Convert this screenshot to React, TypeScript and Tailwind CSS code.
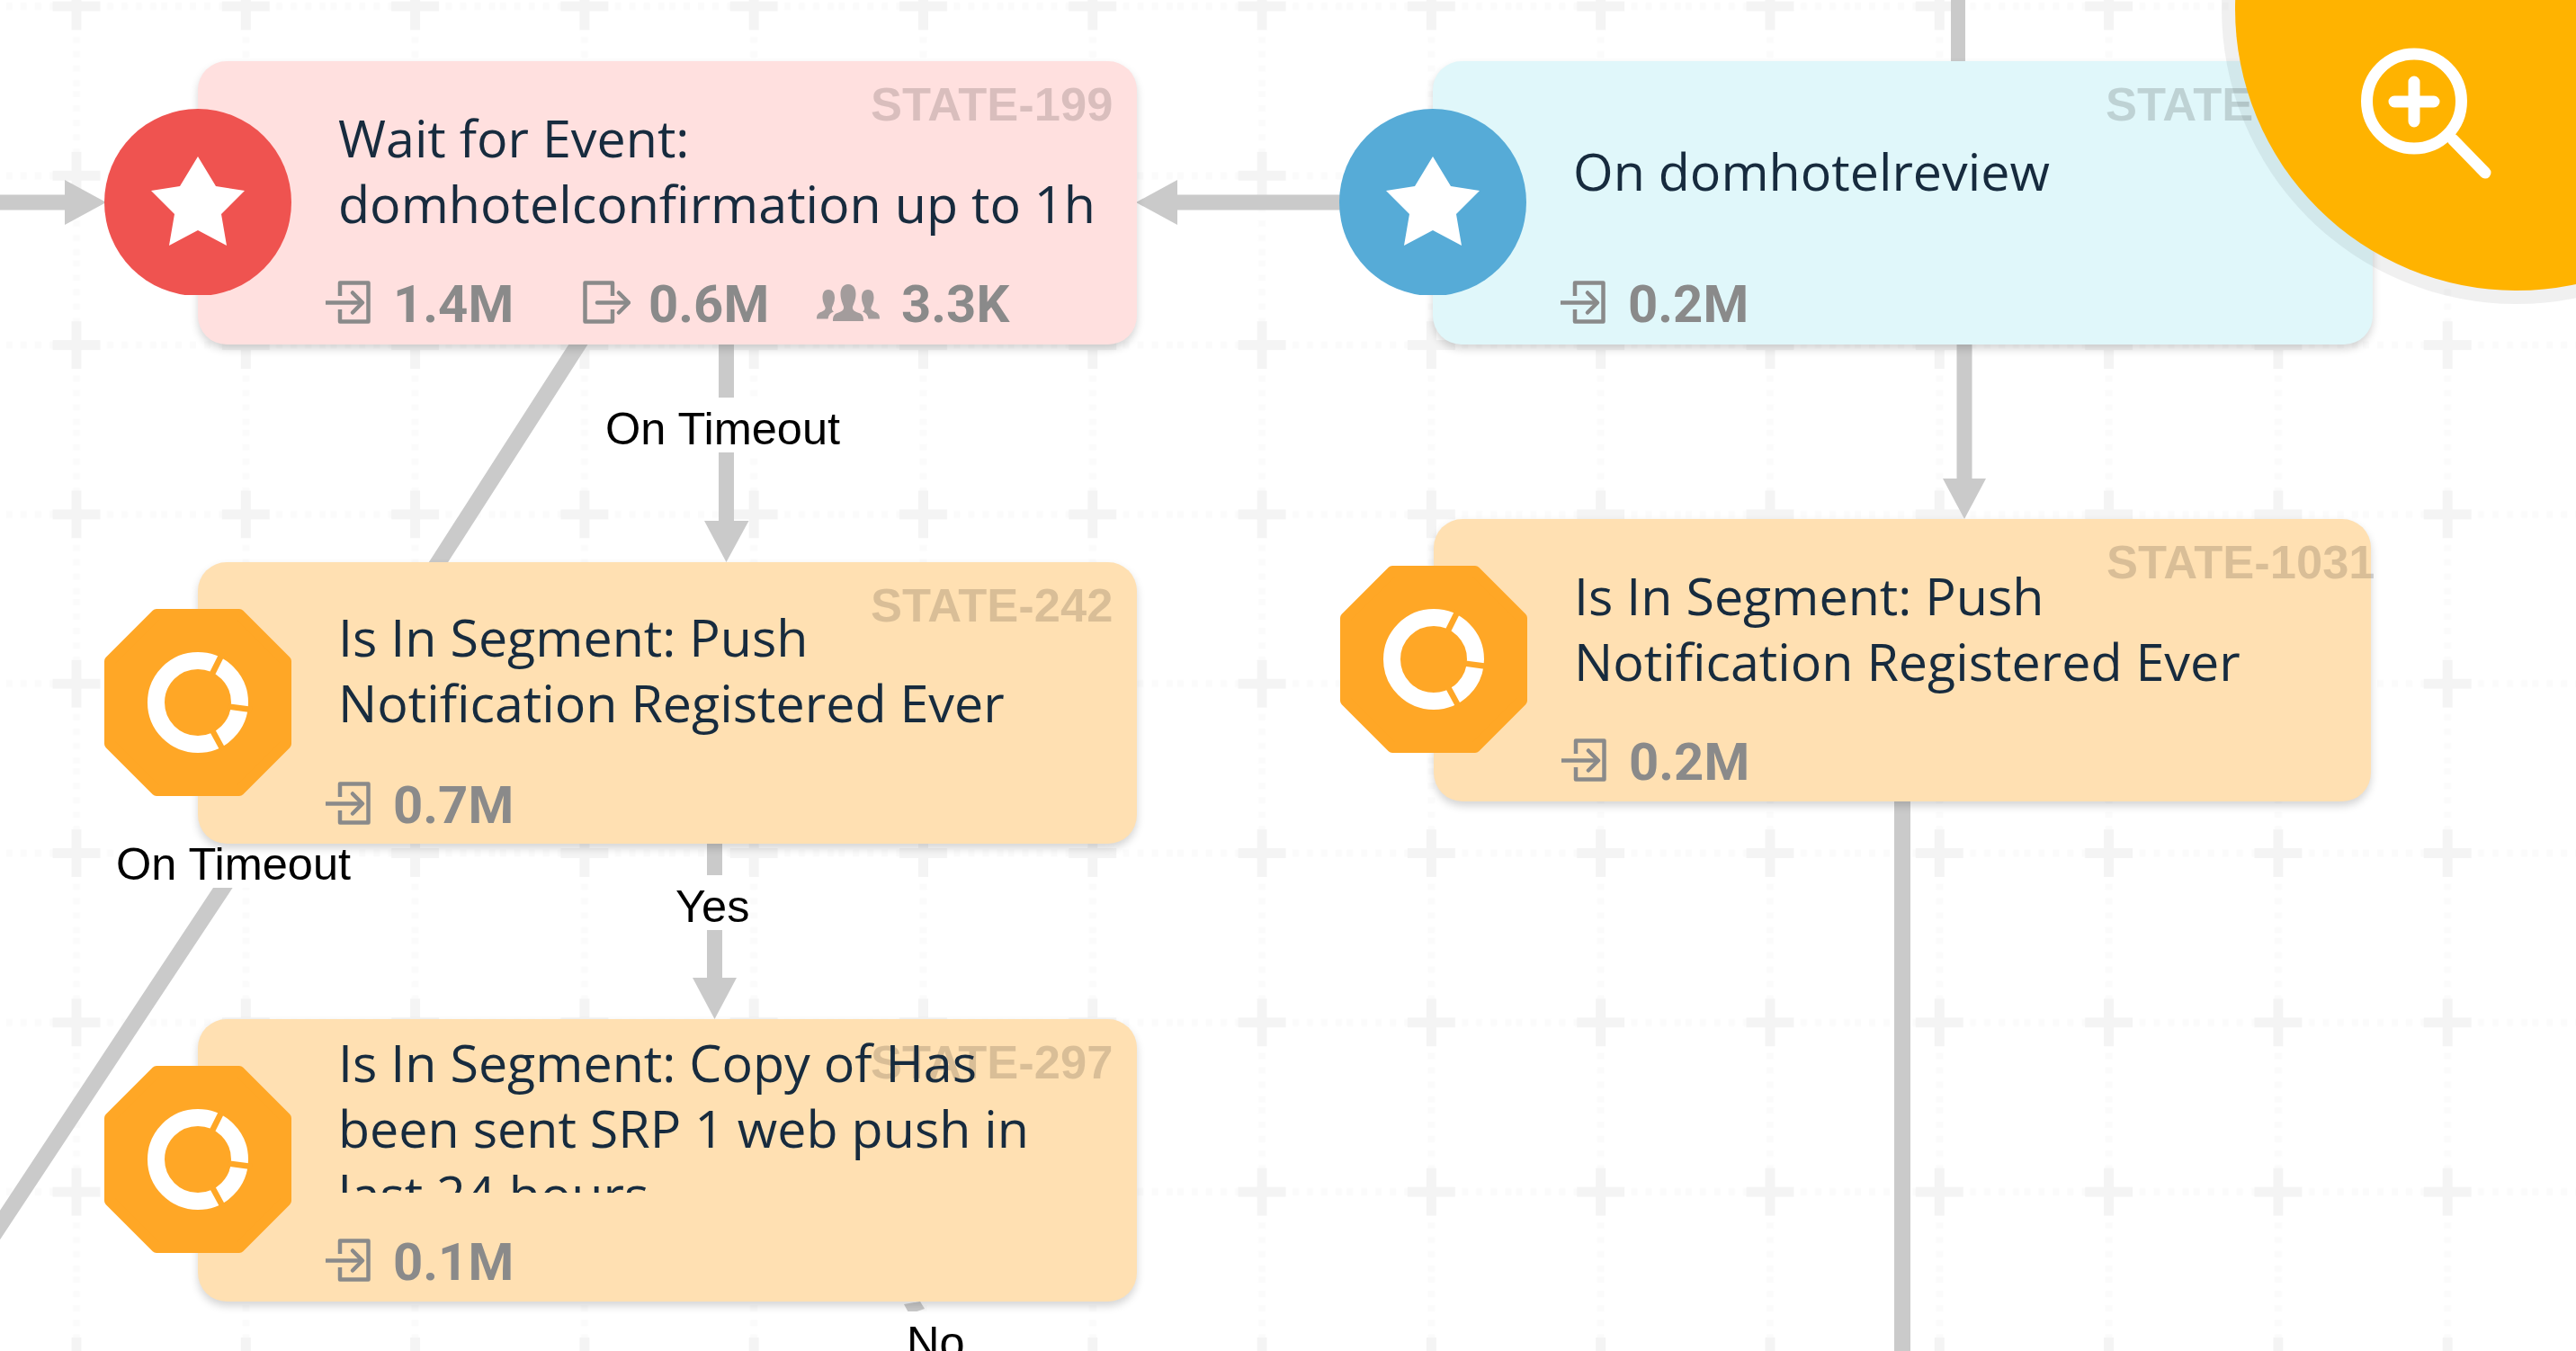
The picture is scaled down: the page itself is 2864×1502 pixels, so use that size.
import React from "react";

const LoginIcon = () => (
  <svg width="50" height="48" viewBox="0 0 50 48" fill="none" stroke="#8a8a8a" strokeWidth="4.5" className="shrink-0">
    <path d="M16 17V2.5H47.5V45.5H16V32" strokeLinejoin="round" />
    <path d="M0.5 24.5H40" strokeLinecap="round" />
    <path d="M30 13.5L41 24.5L30 35.5" strokeLinecap="round" strokeLinejoin="round" />
  </svg>
);

const LogoutIcon = () => (
  <svg width="53" height="48" viewBox="0 0 53 48" fill="none" stroke="#8a8a8a" strokeWidth="4.5" className="shrink-0">
    <path d="M33 17V2.5H2.5V45.5H33V32" strokeLinejoin="round" />
    <path d="M16 24.5H50" strokeLinecap="round" />
    <path d="M40 13.5L51 24.5L40 35.5" strokeLinecap="round" strokeLinejoin="round" />
  </svg>
);

const UsersIcon = () => (
  <svg width="70" height="48" viewBox="0 0 70 48" fill="#a39c9c" className="shrink-0">
    <path d="M35 4c6 0 8.5 5 8.5 11 0 6-2.500 11-3.500 14-.5 3 1 5 7 7 4 1.500 5 4 5 9H18c0-5 1-7.500 5-9 6-2 7.500-4 7-7-1-3-3.500-8-3.500-14C26.500 9 29 4 35 4z" />
    <path d="M13 10c5 0 7 4 7 9 0 5-2 8-3 11-.3 2 .5 3.500 2 4.500-4 1.500-6 4-6.500 8H0c0-4 1-6 4.500-7.500 4-1.500 5.500-3 5-5.500-1-2.500-3-6-3-10.500C6.500 14 8 10 13 10z" />
    <path d="M57 10c-5 0-7 4-7 9 0 5 2 8 3 11 .3 2-.5 3.500-2 4.500 4 1.500 6 4 6.500 8H70c0-4-1-6-4.500-7.500-4-1.500-5.500-3-5-5.500 1-2.500 3-6 3-10.500C63.500 14 62 10 57 10z" />
  </svg>
);

const Star = ({ fill }: { fill: string }) => (
  <svg width="208" height="208" viewBox="-104 -104 208 208" className="absolute left-[-104px] top-[52px]">
    <circle r="104" cy="1" fill={fill} />
    <path d="M0 -50L20 -17L52 -12L26 14L32 49L0 32L-32 49L-26 14L-52 -12L-20 -17Z" fill="#fff" strokeLinejoin="round" />
  </svg>
);

const Segment = () => (
  <svg width="208" height="208" viewBox="-104 -104 208 208" className="absolute left-[-104px] top-[52px]">
    <path d="M-46 -98H46L98 -46V46L46 98H-46L-98 46V-46Z" fill="#ffa726" stroke="#ffa726" strokeWidth="12" strokeLinejoin="round" />
    <circle r="46.500" fill="none" stroke="#fff" strokeWidth="19" />
    <g stroke="#ffa726" strokeWidth="6.500">
      <line x1="15" y1="-30" x2="27" y2="-54" />
      <line x1="33" y1="4.400" x2="60" y2="8" />
      <line x1="15.500" y1="30" x2="28" y2="53" />
    </g>
  </svg>
);

type Stat = { k: "in" | "out" | "users"; v: string };

const StatItem = ({ k, v }: Stat) => {
  if (k === "in")
    return (
      <div className="flex w-[286px] items-start gap-[25px]">
        <LoginIcon />
        <span className="font-['Roboto'] text-[58px] leading-[53px] font-bold text-[#8a8a8a]">{v}</span>
      </div>
    );
  if (k === "out")
    return (
      <div className="flex w-[260px] items-start gap-[20px]">
        <LogoutIcon />
        <span className="font-['Roboto'] text-[58px] leading-[53px] font-bold text-[#8a8a8a]">{v}</span>
      </div>
    );
  return (
    <div className="flex items-start gap-[24px]">
      <UsersIcon />
      <span className="font-['Roboto'] text-[58px] leading-[53px] font-bold text-[#8a8a8a]">{v}</span>
    </div>
  );
};

type NodeProps = {
  pos: string;
  bg: string;
  id: string;
  lines: string[];
  icon: React.ReactNode;
  stats: Stat[];
  textBox?: string;
};

const Node = ({ pos, bg, id, lines, icon, stats, textBox }: NodeProps) => (
  <div className={`absolute rounded-[32px] shadow-[0_5px_10px_rgba(0,0,0,0.17)] ${pos} ${bg}`}>
    <div className="absolute left-[748px] top-[19px] text-[52.5px] leading-[58px] font-bold text-black/15 whitespace-nowrap">
      {id}
    </div>
    {icon}
    <div className="relative pl-[156px] pt-[12px]">
      <div className="flex h-[220px] items-center">
        <div className={`font-['Open_Sans'] text-[57.4px] leading-[73px] text-[#172b3e] whitespace-nowrap ${textBox ?? ""}`}>
          {lines.map((l) => (
            <div key={l}>{l}</div>
          ))}
        </div>
      </div>
      <div className="ml-[-14px] mt-[12px] flex">
        {stats.map((s) => (
          <StatItem key={s.k} {...s} />
        ))}
      </div>
    </div>
  </div>
);

const Grid = () => (
  <svg width="2864" height="1502" className="absolute inset-0">
    <defs>
      <pattern id="grid" x="-9.150" y="-87.150" width="188.300" height="188.300" patternUnits="userSpaceOnUse">
        <g fill="none">
          <path d="M94.150 0V188.300M0 94.150H188.300" stroke="#fbfbfb" strokeWidth="8" strokeDasharray="7 9" />
          <path d="M67.650 94.150H120.650M94.150 67.650V120.650" stroke="#f4f4f4" strokeWidth="11" />
        </g>
      </pattern>
    </defs>
    <rect width="2864" height="1502" fill="url(#grid)" />
  </svg>
);

const Edges = () => (
  <svg width="2864" height="1502" className="absolute inset-0">
    <g stroke="#cacaca" fill="none">
      <line x1="0" y1="225" x2="74" y2="225" strokeWidth="17" />
      <line x1="1305" y1="225" x2="1492" y2="225" strokeWidth="17" />
      <line x1="2177" y1="0" x2="2177" y2="70" strokeWidth="16" />
      <line x1="2184" y1="383" x2="2184" y2="535" strokeWidth="17" />
      <line x1="2115" y1="885" x2="2115" y2="1502" strokeWidth="18" />
      <line x1="807.500" y1="375" x2="807.500" y2="582" strokeWidth="17" />
      <line x1="794.500" y1="930" x2="794.500" y2="1090" strokeWidth="17" />
      <path d="M648 375L487.500 625L173 1100L-33 1412" strokeWidth="18" />
    </g>
    <g fill="#cacaca">
      <path d="M72 200L118 225L72 250Z" />
      <path d="M1263 225L1309 200V250Z" />
      <path d="M2160 532H2208L2184 577Z" />
      <path d="M783 579H832.500L807.500 625Z" />
      <path d="M770 1087H819L794.500 1133Z" />
      <path d="M1005 1450L1023 1447L1028 1455L1011 1461Z" />
    </g>
  </svg>
);

const Label = ({ pos, text }: { pos: string; text: string }) => (
  <div className={`absolute h-[61px] bg-white text-[50.5px] leading-[69px] text-black whitespace-nowrap ${pos}`}>
    {text}
  </div>
);

export default function App() {
  const inOnly = (v: string): Stat[] => [{ k: "in", v }];
  return (
    <div className="relative h-[1502px] w-[2864px] overflow-hidden bg-white font-['Liberation_Sans',Arial,sans-serif]">
      <Grid />
      <Edges />
      <Label pos="left-[673px] top-[442px]" text="On Timeout" />
      <Label pos="left-[751px] top-[973px]" text="Yes" />
      <Label pos="left-[129px] top-[926px]" text="On Timeout" />
      <Label pos="left-[1008px] top-[1458px]" text="No" />

      <Node
        pos="left-[220px] top-[68px] h-[315px] w-[1044px]"
        bg="bg-[#ffe0df]"
        id="STATE-199"
        lines={["Wait for Event:", "domhotelconfirmation up to 1h"]}
        icon={<Star fill="#ef5350" />}
        stats={[
          { k: "in", v: "1.4M" },
          { k: "out", v: "0.6M" },
          { k: "users", v: "3.3K" },
        ]}
      />
      <Node
        pos="left-[1593px] top-[68px] h-[315px] w-[1045px]"
        bg="bg-[#e0f7fa]"
        id="STATE-223"
        lines={["On domhotelreview"]}
        icon={<Star fill="#56abd7" />}
        stats={inOnly("0.2M")}
      />
      <Node
        pos="left-[220px] top-[625px] h-[313px] w-[1044px]"
        bg="bg-[#ffe0b2]"
        id="STATE-242"
        lines={["Is In Segment: Push", "Notification Registered Ever"]}
        icon={<Segment />}
        stats={inOnly("0.7M")}
        textBox="-mt-[4px]"
      />
      <Node
        pos="left-[1594px] top-[577px] h-[314px] w-[1042px]"
        bg="bg-[#ffe0b2]"
        id="STATE-1031"
        lines={["Is In Segment: Push", "Notification Registered Ever"]}
        icon={<Segment />}
        stats={inOnly("0.2M")}
      />
      <Node
        pos="left-[220px] top-[1133px] h-[314px] w-[1044px]"
        bg="bg-[#ffe0b2]"
        id="STATE-297"
        lines={["Is In Segment: Copy of Has", "been sent SRP 1 web push in", "last 24 hours"]}
        icon={<Segment />}
        stats={inOnly("0.1M")}
        textBox="h-[181px] self-start overflow-hidden"
      />

      <div className="absolute left-[2485px] top-[-303px] h-[626px] w-[626px] rounded-full bg-[#ffb300] shadow-[0_0_0_15px_rgba(0,0,0,0.06)]" />
      <svg viewBox="2620 40 150 170" className="absolute left-[2620px] top-[40px] h-[170px] w-[150px]" fill="none" stroke="#fff" strokeWidth="13" strokeLinecap="round">
        <circle cx="2684" cy="112.500" r="52.500" />
        <path d="M2727 155L2763 192" />
        <path d="M2662 113H2706M2684 91V135" />
      </svg>
    </div>
  );
}
